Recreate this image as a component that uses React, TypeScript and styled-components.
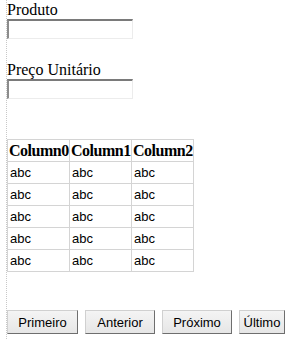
import React from "react";
import styled, { createGlobalStyle } from "styled-components";

const Global = createGlobalStyle`
  html, body { margin: 0; padding: 0; background: #fff; }
  body { font-family: "Liberation Serif", "Times New Roman", serif; color: #000; }
`;

const Page = styled.div`
  margin-left: 6px;
  border-left: 1px dotted #c8c8c8;
  min-height: 339px;
  box-sizing: border-box;
  padding-top: 1px;
  display: flex;
  flex-direction: column;
`;

const Field = styled.div`
  display: flex;
  flex-direction: column;
  align-items: flex-start;
  margin-bottom: 22px;
`;

const Label = styled.label`
  font-size: 16px;
  line-height: 18px;
`;

const TextBox = styled.input`
  width: 126px;
  height: 20px;
  box-sizing: border-box;
  margin: 0;
  padding: 1px 2px;
  border-style: solid;
  border-width: 2px 1px 1px 2px;
  border-color: #7a7a7a #ececec #ececec #8c8c8c;
  background: #fff;
  outline: none;
`;

const Grid = styled.table`
  margin-top: 18px;
  border-collapse: collapse;
  table-layout: fixed;
  width: 187px;
  border: 1px solid #a8a8a8;
`;

const HeadCell = styled.th`
  height: 21px;
  padding: 0 0 0 1px;
  border: 1px solid #d4d4d4;
  text-align: left;
  font-size: 16px;
  font-weight: bold;
  letter-spacing: -0.5px;
  white-space: nowrap;
  overflow: visible;
`;

const Cell = styled.td`
  height: 21px;
  padding: 0 2px;
  border: 1px solid #d4d4d4;
  font-family: "Liberation Sans", Arial, sans-serif;
  font-size: 13px;
`;

const Pager = styled.div`
  display: flex;
  gap: 7px;
  margin-top: 38px;
`;

const NavButton = styled.button<{ $w: number }>`
  width: ${(p) => p.$w}px;
  height: 24px;
  margin: 0;
  padding: 0;
  font-family: "Liberation Sans", Arial, sans-serif;
  font-size: 13px;
  color: #000;
  background: linear-gradient(#f4f4f4, #e6e6e6);
  border: 1px solid;
  border-color: #d0d0d0 #6e6e6e #6e6e6e #d0d0d0;
  border-radius: 0;
`;

const rows = [0, 1, 2, 3, 4];
const buttons: [string, number][] = [
  ["Primeiro", 71],
  ["Anterior", 70],
  ["Próximo", 70],
  ["Último", 46],
];

export default function App() {
  return (
    <>
      <Global />
      <Page>
        <Field>
          <Label>Produto</Label>
          <TextBox />
        </Field>
        <Field>
          <Label>Preço Unitário</Label>
          <TextBox />
        </Field>
        <Grid>
          <thead>
            <tr>
              <HeadCell>Column0</HeadCell>
              <HeadCell>Column1</HeadCell>
              <HeadCell>Column2</HeadCell>
            </tr>
          </thead>
          <tbody>
            {rows.map((r) => (
              <tr key={r}>
                <Cell>abc</Cell>
                <Cell>abc</Cell>
                <Cell>abc</Cell>
              </tr>
            ))}
          </tbody>
        </Grid>
        <Pager>
          {buttons.map(([t, w]) => (
            <NavButton key={t} $w={w}>
              {t}
            </NavButton>
          ))}
        </Pager>
      </Page>
    </>
  );
}
